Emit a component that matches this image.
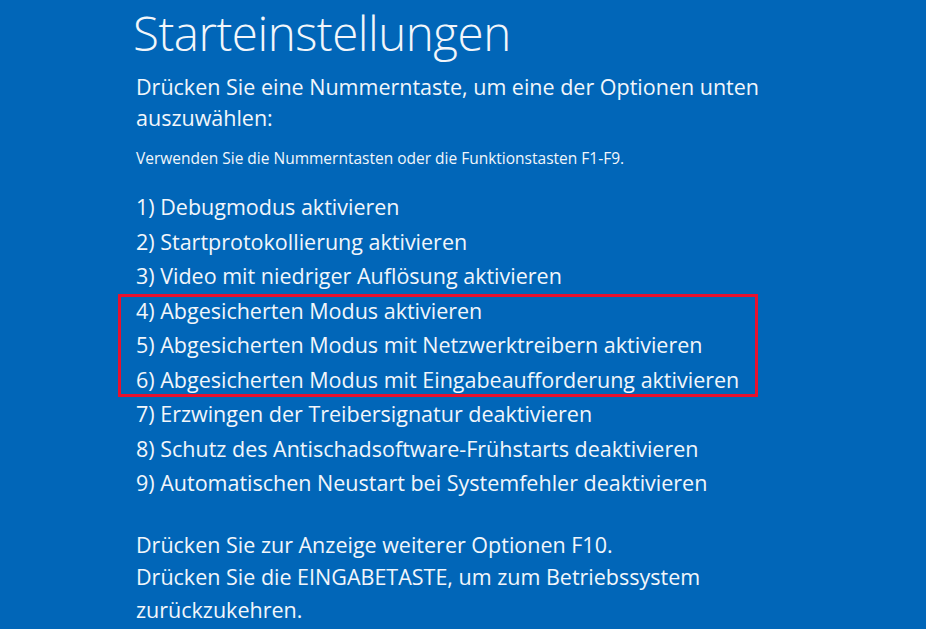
import React from "react";

const items = [
  "1) Debugmodus aktivieren",
  "2) Startprotokollierung aktivieren",
  "3) Video mit niedriger Auflösung aktivieren",
];
const boxed = [
  "4) Abgesicherten Modus aktivieren",
  "5) Abgesicherten Modus mit Netzwerktreibern aktivieren",
  "6) Abgesicherten Modus mit Eingabeaufforderung aktivieren",
];
const rest = [
  "7) Erzwingen der Treibersignatur deaktivieren",
  "8) Schutz des Antischadsoftware-Frühstarts deaktivieren",
  "9) Automatischen Neustart bei Systemfehler deaktivieren",
];

export default function App() {
  return (
    <div
      className="w-[926px] h-[629px] overflow-hidden bg-[#0166b8] text-[#f2f6fb] pl-[136px]"
      style={{ fontFamily: '"Open Sans", "Noto Sans", sans-serif' }}
    >
      <h1 className="text-[47.5px] leading-[66px] font-light -ml-[3px] tracking-[-0.5px]">Starteinstellungen</h1>
      <p className="text-[21.5px] leading-[31px] mt-[5px] w-[700px]">
        Drücken Sie eine Nummerntaste, um eine der Optionen unten auszuwählen:
      </p>
      <p className="text-[15.5px] leading-[22px] mt-[14px]">
        Verwenden Sie die Nummerntasten oder die Funktionstasten F1-F9.
      </p>
      <div className="mt-[21px] text-[21.5px] leading-[34.5px]">
        {items.map((t) => (
          <div key={t}>{t}</div>
        ))}
        <div className="-ml-[18px] w-[640px] shadow-[inset_0_0_0_3px_#e8112d] pl-[18px]">
          {boxed.map((t) => (
            <div key={t}>{t}</div>
          ))}
        </div>
        {rest.map((t) => (
          <div key={t}>{t}</div>
        ))}
      </div>
      <div className="mt-[28px] text-[21.5px] leading-[32.5px]">
        <div>Drücken Sie zur Anzeige weiterer Optionen F10.</div>
        <div className="w-[600px]">
          Drücken Sie die EINGABETASTE, um zum Betriebssystem zurückzukehren.
        </div>
      </div>
    </div>
  );
}
